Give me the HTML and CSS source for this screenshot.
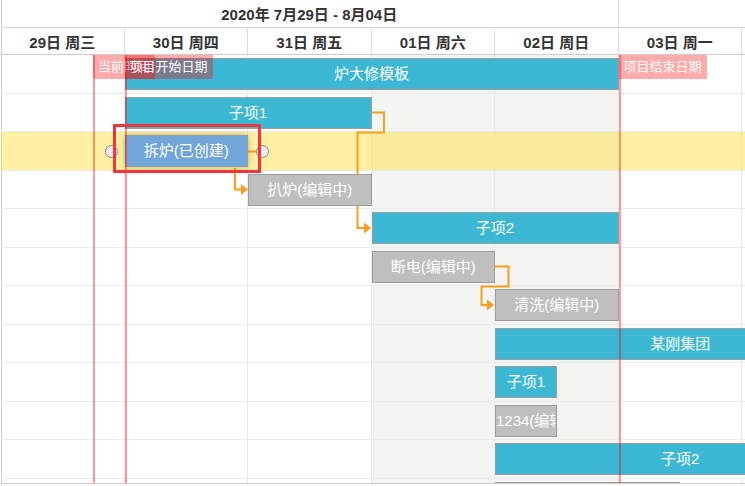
FILE: index.html
```html
<!DOCTYPE html>
<html lang="zh-CN">
<head>
<meta charset="utf-8">
<title>甘特图</title>
<link rel="stylesheet" href="styles.css">
</head>
<body>
<div class="gantt">
  <div class="head">
    <div class="head-row top">
      <div class="hcell span5">2020年 7月29日 - 8月04日</div>
      <div class="hcell span7">2020年 8月03日 - 8月09日</div>
    </div>
    <div class="head-row days">
      <div class="hcell day">29日 周三</div>
      <div class="hcell day">30日 周四</div>
      <div class="hcell day">31日 周五</div>
      <div class="hcell day">01日 周六</div>
      <div class="hcell day">02日 周日</div>
      <div class="hcell day">03日 周一</div>
      <div class="hcell day">04日 周二</div>
    </div>
  </div>
  <div class="body">
    <div class="row"><div class="bar group" style="left:123.5px;width:494px">炉大修模板</div></div>
    <div class="row"><div class="bar group" style="left:123.5px;width:247px">子项1</div></div>
    <div class="row selected"><div class="bar created" style="left:123.5px;width:123.5px">拆炉(已创建)</div></div>
    <div class="row"><div class="bar draft" style="left:247px;width:123.5px">扒炉(编辑中)</div></div>
    <div class="row"><div class="bar group" style="left:370.5px;width:247px">子项2</div></div>
    <div class="row"><div class="bar draft" style="left:370.5px;width:123.5px">断电(编辑中)</div></div>
    <div class="row"><div class="bar draft" style="left:494px;width:123.5px">清洗(编辑中)</div></div>
    <div class="row"><div class="bar group" style="left:494px;width:370.5px">某刚集团</div></div>
    <div class="row"><div class="bar group" style="left:494px;width:61.75px">子项1</div></div>
    <div class="row"><div class="bar draft" style="left:494px;width:61.75px">1234(编辑中)</div></div>
    <div class="row"><div class="bar group" style="left:494px;width:370.5px">子项2</div></div>
    <div class="row"><div class="bar draft" style="left:494px;width:185.25px">检修(编辑中)</div></div>

    <svg class="links" viewBox="0 0 744 429" xmlns="http://www.w3.org/2000/svg">
      <g transform="translate(-1,-55)" fill="none" stroke="#f99d1c" stroke-width="2">
        <path d="M247 151.5 H257"/>
        <path d="M235 168 V189.5 H242"/>
        <path d="M371 112.5 H384 V132.5 H357.5 V228 H365"/>
        <path d="M494 266.5 H508.5 V286.5 H481.5 V305 H488"/>
      </g>
      <g transform="translate(-1,-55)" fill="#f99d1c">
        <path d="M241 184 L248 189.5 L241 195 Z"/>
        <path d="M364 222.5 L371 228 L364 233.5 Z"/>
        <path d="M487 299.5 L494 305 L487 310.5 Z"/>
      </g>
    </svg>

    <div class="marker now"><span class="marker-label">当前时间</span></div>
    <div class="marker start"><span class="marker-label">项目开始日期</span></div>
    <div class="marker end"><span class="marker-label">项目结束日期</span></div>

    <div class="handle handle-in"></div>
    <div class="handle handle-out"></div>
    <div class="focus"></div>
  </div>
</div>
</body>
</html>
```

FILE: styles.css
```css
* {
  box-sizing: border-box;
}

body {
  margin: 0;
  background: #fff;
  font-family: "Liberation Sans", "Noto Sans CJK SC", sans-serif;
}

.gantt {
  margin-left: 1px;
  width: 744px;
  height: 484px;
  overflow: hidden;
  position: relative;
  box-shadow: inset 1px 0 0 #cccccc;
}

.head-row {
  display: flex;
}

.head-row.top {
  height: 28px;
  border-bottom: 1px solid #d6d6d6;
}

.head-row.days {
  height: 27px;
  border-bottom: 1px solid #cccccc;
}

.hcell {
  flex: 0 0 auto;
  display: flex;
  align-items: center;
  justify-content: center;
  font-size: 15px;
  font-weight: bold;
  color: #333;
  white-space: nowrap;
  border-right: 1px solid #dddddd;
}

.span5 {
  width: 617.5px;
}

.span7 {
  width: 864.5px;
}

.day {
  width: 123.5px;
}

.body {
  position: relative;
  z-index: 0;
  height: 429px;
  overflow: hidden;
  border-bottom: 1px solid #cccccc;
  background:
    repeating-linear-gradient(90deg, transparent 0 122.5px, #e8e8e8 122.5px 123.5px),
    linear-gradient(90deg, transparent 370.5px, #f4f5f2 370.5px 617.5px, transparent 617.5px);
}

.row {
  position: relative;
  height: 38.5px;
  border-bottom: 1px solid #ebebeb;
}

.row.selected {
  background: rgba(253, 226, 60, 0.47);
}

.bar {
  position: absolute;
  top: 3px;
  height: 32px;
  z-index: 2;
  border: 1px solid #9d9d9d;
  color: #fff;
  font-size: 15px;
  line-height: 30px;
  text-align: center;
  white-space: nowrap;
  overflow: hidden;
}

.bar.group {
  background: #3cb8d4;
}

.bar.draft {
  background: #bfbfbf;
}

.bar.created {
  background: #70a6d9;
  border-color: #8c9db3;
  box-shadow: 0 0 6px rgba(120, 95, 0, 0.45);
}

.links {
  position: absolute;
  left: 0;
  top: 0;
  width: 744px;
  height: 429px;
  z-index: 1;
  pointer-events: none;
}

.marker {
  position: absolute;
  top: 0;
  bottom: 0;
  width: 2px;
  z-index: 3;
  background: rgba(255, 0, 0, 0.4);
}

.marker.now {
  left: 92px;
}

.marker.start {
  left: 123.5px;
}

.marker.end {
  left: 617.5px;
}

.marker-label {
  position: absolute;
  left: 0;
  top: 0;
  height: 24px;
  padding: 0 5px;
  font-size: 13px;
  line-height: 24px;
  color: #fff;
  white-space: nowrap;
  background: rgba(255, 0, 0, 0.33);
}

.handle {
  position: absolute;
  width: 13px;
  height: 13px;
  border-radius: 50%;
  background: #eeeeee;
  border: 1px solid #888;
  z-index: 3;
}

.handle-in {
  left: 103.5px;
  top: 89.5px;
}

.handle-out {
  left: 255px;
  top: 89.5px;
}

.focus {
  position: absolute;
  left: 112px;
  top: 69px;
  width: 148px;
  height: 49px;
  border: 3px solid #f5333a;
  z-index: 4;
}
```
